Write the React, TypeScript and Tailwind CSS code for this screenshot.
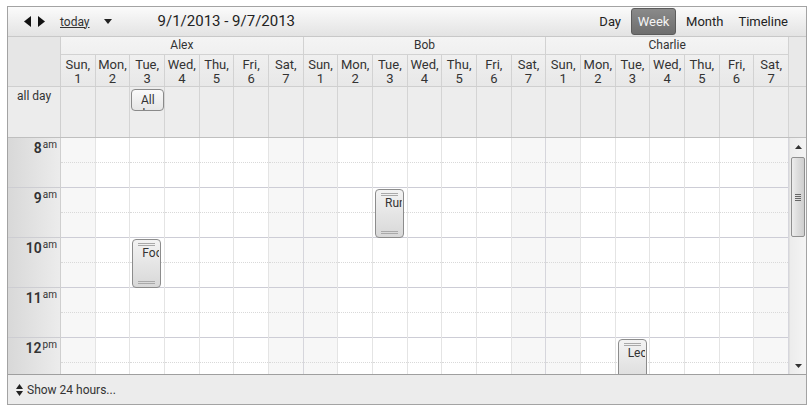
import React from "react";

const DAYS = ["Sun,", "Mon,", "Tue,", "Wed,", "Thu,", "Fri,", "Sat,"];
const RESOURCES = ["Alex", "Bob", "Charlie"];
const COLS = RESOURCES.flatMap((r) =>
  DAYS.map((d, i) => ({ r, d, n: i + 1, weekend: i === 0 || i === 6, last: i === 6 }))
);
const HOURS = [8, 9, 10, 11, 12, 13, 14];
const EVENTS = [
  { col: 2, hour: 10, title: "Foo" },
  { col: 9, hour: 9, title: "Run" },
  { col: 16, hour: 12, title: "Lecture" },
];

function hourLabel(h: number) {
  const n = h > 12 ? h - 12 : h;
  return { n, s: h >= 12 ? "pm" : "am" };
}

function Event({ title }: { title: string }) {
  return (
    <div className="absolute left-[2px] top-[1px] w-[29px] h-[49px] rounded-[4px] border border-[#8c8c8c] bg-gradient-to-b from-[#f3f3f3] to-[#d8d8d8] overflow-hidden z-10">
      <div className="absolute top-[3px] left-[5px] right-[5px] h-[3px] border-t border-b border-[#a9a9a9]" />
      <div className="absolute bottom-[3px] left-[5px] right-[5px] h-[3px] border-t border-b border-[#a9a9a9]" />
      <div className="absolute top-[6px] left-[9px] right-[1px] overflow-hidden whitespace-nowrap text-[12px] leading-[14px] text-[#333]">
        {title}
      </div>
    </div>
  );
}

export default function App() {
  return (
    <div className="w-[812px] h-[409px] bg-white pt-[6px] pl-[7px] font-['Roboto',sans-serif] text-[#333]">
      <div className="w-[800px] h-[399px] border border-[#a3a3a3] flex flex-col overflow-hidden">
        {/* Toolbar */}
        <div className="h-[30px] shrink-0 flex items-center border-b border-[#c8c8c8] bg-gradient-to-b from-[#fbfbfb] to-[#e3e3e3]">
          <div className="flex items-center gap-[6px] ml-[16px]">
            <svg width="8" height="11" viewBox="0 0 8 11"><path d="M7 0 L7 11 L0 5.5 Z" fill="#111" /></svg>
            <svg width="8" height="11" viewBox="0 0 8 11"><path d="M0 0 L0 11 L7 5.5 Z" fill="#111" /></svg>
          </div>
          <span className="ml-[14px] text-[12px] underline text-[#333]">today</span>
          <svg className="ml-[14px]" width="8" height="5" viewBox="0 0 8 5"><path d="M0 0 L8 0 L4 5 Z" fill="#222" /></svg>
          <span className="ml-[46px] text-[15px] text-[#222]">9/1/2013 - 9/7/2013</span>
          <div className="ml-auto mr-[18px] flex items-center text-[13px] text-[#222]">
            <span>Day</span>
            <span className="ml-[10px] w-[45px] h-[27px] flex items-center justify-center rounded-[3px] border border-[#5c5c5c] bg-gradient-to-b from-[#8a8a8a] to-[#6e6e6e] text-[#f4f4f4]">
              Week
            </span>
            <span className="ml-[10px]">Month</span>
            <span className="ml-[15px]">Timeline</span>
          </div>
        </div>

        {/* Header: resources + days */}
        <div className="h-[50px] shrink-0 flex border-b border-[#cfcfcf]">
          <div className="w-[53px] shrink-0 border-r border-[#cfcfcf] bg-[#e6e6e6]" />
          <div className="w-[728px] shrink-0 flex flex-col bg-gradient-to-b from-[#f4f4f4] to-[#e8e8e8]">
            <div className="h-[18px] grid grid-cols-3 border-b border-[#d2d2d2]">
              {RESOURCES.map((r) => (
                <div key={r} className="border-r border-[#d2d2d2] text-center text-[12px] leading-[17px] text-[#333]">
                  {r}
                </div>
              ))}
            </div>
            <div className="flex-1 grid grid-cols-[repeat(21,minmax(0,1fr))]">
              {COLS.map((c, i) => (
                <div
                  key={i}
                  className="border-r border-[#d2d2d2] text-center text-[13px] leading-[14px] pt-[3px] text-[#333] whitespace-nowrap overflow-hidden"
                >
                  <div>{c.d}</div>
                  <div>{c.n}</div>
                </div>
              ))}
            </div>
          </div>
          <div className="flex-1 bg-[#e9e9e9]" />
        </div>

        {/* All-day row */}
        <div className="h-[51px] shrink-0 flex border-b border-[#bfbfbf]">
          <div className="w-[53px] shrink-0 border-r border-[#cfcfcf] bg-[#ececec] pl-[9px] pt-[2px] text-[12px] leading-[14px] text-[#333] whitespace-nowrap">
            all day
          </div>
          <div className="w-[728px] shrink-0 grid grid-cols-[repeat(21,minmax(0,1fr))] bg-[#ededed]">
            {COLS.map((c, i) => (
              <div key={i} className="relative border-r border-[#d4d4d4]">
                {i === 2 && (
                  <div className="absolute left-[1px] top-[2px] w-[33px] h-[22px] rounded-[4px] border border-[#8a8a8a] bg-gradient-to-b from-[#fafafa] to-[#e6e6e6] overflow-hidden text-center text-[12px] leading-[14px] pt-[3px] text-[#333] z-10">
                    All day
                  </div>
                )}
              </div>
            ))}
          </div>
          <div className="flex-1 bg-[#e9e9e9]" />
        </div>

        {/* Body */}
        <div className="h-[236px] shrink-0 flex overflow-hidden">
          <div className="w-[53px] shrink-0 border-r border-[#cfcfcf] bg-gradient-to-r from-[#d8d8d8] to-[#ececec]">
            {HOURS.map((h) => {
              const l = hourLabel(h);
              return (
                <div key={h} className="h-[50px] border-b border-[#cdcdd2] flex justify-end items-start pr-[3px] pt-[3px]">
                  <span className="text-[14px] leading-[15px] font-semibold text-[#333]">{l.n}</span>
                  <span className="ml-[1px] text-[10px] leading-[10px] text-[#333] -mt-[1px]">{l.s}</span>
                </div>
              );
            })}
          </div>
          <div className="w-[728px] shrink-0 grid grid-cols-[repeat(21,minmax(0,1fr))] content-start">
            {COLS.map((c, i) => (
              <div
                key={i}
                className={
                  "relative border-r " +
                  (c.last ? "border-[#d6d6dc] " : "border-[#e4e4e4] ") +
                  (c.weekend ? "bg-[#f7f7f7]" : "bg-white")
                }
              >
                {HOURS.map((h) => {
                  const ev = EVENTS.find((e) => e.col === i && e.hour === h);
                  return (
                    <div key={h} className="relative h-[50px] border-b border-[#cdcdd6]">
                      <div className="h-[25px] border-b border-dotted border-[#d9d9d9]" />
                      {ev && <Event title={ev.title} />}
                    </div>
                  );
                })}
              </div>
            ))}
          </div>
          {/* Scrollbar */}
          <div className="flex-1 flex flex-col items-center bg-gradient-to-r from-[#ececec] to-[#f4f4f4] border-l border-[#e0e0e0]">
            <div className="h-[17px] w-full flex items-center justify-center">
              <svg width="7" height="4" viewBox="0 0 7 4"><path d="M0 4 L7 4 L3.5 0 Z" fill="#333" /></svg>
            </div>
            <div className="mt-[2px] w-[14px] h-[80px] rounded-[2px] border border-[#8f8f8f] bg-gradient-to-r from-[#ededed] via-[#dcdcdc] to-[#cfcfcf] flex flex-col items-center justify-center gap-[1px]">
              <div className="w-[6px] h-[1px] bg-[#666]" />
              <div className="w-[6px] h-[1px] bg-[#666]" />
              <div className="w-[6px] h-[1px] bg-[#666]" />
              <div className="w-[6px] h-[1px] bg-[#666]" />
            </div>
            <div className="flex-1" />
            <div className="h-[17px] w-full flex items-center justify-center">
              <svg width="7" height="4" viewBox="0 0 7 4"><path d="M0 0 L7 0 L3.5 4 Z" fill="#333" /></svg>
            </div>
          </div>
        </div>

        {/* Footer */}
        <div className="flex-1 border-t border-[#9f9f9f] bg-[#ececec] flex items-center pl-[8px]">
          <svg width="7" height="12" viewBox="0 0 7 12">
            <path d="M0 5 L7 5 L3.5 0 Z" fill="#222" />
            <path d="M0 7 L7 7 L3.5 12 Z" fill="#222" />
          </svg>
          <span className="ml-[4px] text-[12px] leading-[16px] text-[#333]">Show 24 hours...</span>
        </div>
      </div>
    </div>
  );
}
